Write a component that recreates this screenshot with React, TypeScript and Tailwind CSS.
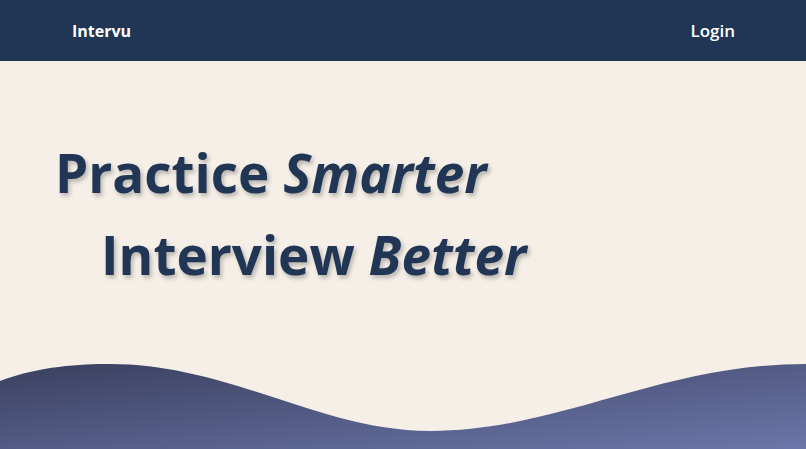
import React from "react";

const Navbar: React.FC = () => {
  return (
    <nav className="h-[61px] bg-[#213655] flex items-center justify-between pl-[72px] pr-[71px]">
      <span className="text-white text-[16px] font-bold">Intervu</span>
      <span className="text-white text-[17px] font-semibold">Login</span>
    </nav>
  );
};

const Wave: React.FC = () => {
  return (
    <svg
      className="absolute left-0 bottom-0 w-full h-[85px]"
      viewBox="0 0 806 85"
      preserveAspectRatio="none"
    >
      <defs>
        <linearGradient id="waveGrad" x1="0" y1="0" x2="1" y2="1">
          <stop offset="0%" stopColor="#3b405f" />
          <stop offset="100%" stopColor="#6b77aa" />
        </linearGradient>
      </defs>
      <path
        d="M0 17 C40 2 80 0 110 0 C230 0 320 67 430 67 C560 67 660 0 806 0 L806 85 L0 85 Z"
        fill="url(#waveGrad)"
      />
    </svg>
  );
};

export default function App() {
  return (
    <div className="w-full h-[449px] bg-[#f5efe7] overflow-hidden font-['Open_Sans',sans-serif]">
      <Navbar />
      <main className="relative h-[388px]">
        <div className="pt-[71px] pl-[55px] text-[#213655] font-bold text-[53px] leading-[82px] [text-shadow:2px_3px_4px_rgba(0,0,0,0.25)]">
          <h1>
            Practice <em className="italic">Smarter</em>
          </h1>
          <h1 className="pl-[46px]">
            Interview <em className="italic">Better</em>
          </h1>
        </div>
        <Wave />
      </main>
    </div>
  );
}
